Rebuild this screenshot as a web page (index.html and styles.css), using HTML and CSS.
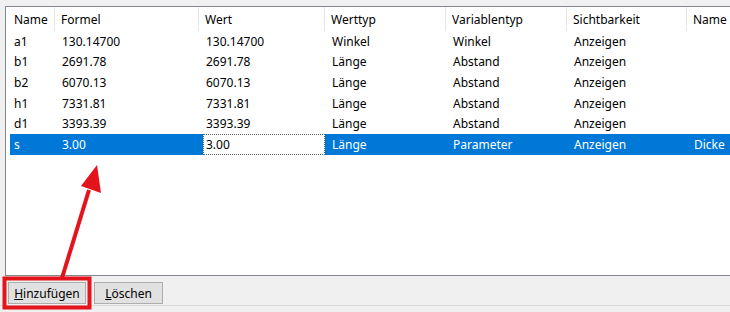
FILE: index.html
```html
<!DOCTYPE html>
<html lang="de">
  <head>
    <meta charset="UTF-8" />
    <title>Variablen</title>
    <link rel="stylesheet" href="styles.css">
  </head>
  <body>
    <div class="panel">
      <div class="grid">
        <div class="head">Name</div>
        <div class="head">Formel</div>
        <div class="head">Wert</div>
        <div class="head">Werttyp</div>
        <div class="head">Variablentyp</div>
        <div class="head">Sichtbarkeit</div>
        <div class="head last">Name</div>

        <div class="cell">a1</div><div class="cell">130.14700</div><div class="cell">130.14700</div><div class="cell">Winkel</div><div class="cell">Winkel</div><div class="cell">Anzeigen</div><div class="cell"></div>
        <div class="cell">b1</div><div class="cell">2691.78</div><div class="cell">2691.78</div><div class="cell">Länge</div><div class="cell">Abstand</div><div class="cell">Anzeigen</div><div class="cell"></div>
        <div class="cell">b2</div><div class="cell">6070.13</div><div class="cell">6070.13</div><div class="cell">Länge</div><div class="cell">Abstand</div><div class="cell">Anzeigen</div><div class="cell"></div>
        <div class="cell">h1</div><div class="cell">7331.81</div><div class="cell">7331.81</div><div class="cell">Länge</div><div class="cell">Abstand</div><div class="cell">Anzeigen</div><div class="cell"></div>
        <div class="cell">d1</div><div class="cell">3393.39</div><div class="cell">3393.39</div><div class="cell">Länge</div><div class="cell">Abstand</div><div class="cell">Anzeigen</div><div class="cell"></div>

        <div class="cell sel">s</div><div class="cell sel">3.00</div><div class="cell sel editwrap"><span class="edit">3.00</span></div><div class="cell sel">Länge</div><div class="cell sel">Parameter</div><div class="cell sel">Anzeigen</div><div class="cell sel">Dicke</div>
      </div>
    </div>

    <div class="buttons">
      <button class="btn add"><u>H</u>inzufügen</button>
      <button class="btn del"><u>L</u>öschen</button>
    </div>
    <div class="footer"></div>

    <!-- annotation: red arrow and frame -->
    <svg class="mark" width="730" height="312" viewBox="0 0 730 312">
      <rect x="4.5" y="278.5" width="85" height="29" fill="none" stroke="#e3141b" stroke-width="4" />
      <line x1="62" y1="278" x2="89" y2="190" stroke="#e3141b" stroke-width="4" />
      <polygon points="97,165 81,186 101,193" fill="#e3141b" />
    </svg>
  </body>
</html>
```

FILE: styles.css
```css
body {
  margin: 0;
  width: 730px;
  height: 312px;
  overflow: hidden;
  background-color: #f0f0f0;
  font-family: "Noto Sans", "Open Sans", sans-serif;
  font-size: 12px;
  color: #000;
  position: relative;
}

.panel {
  margin: 6px 0 0 5px;
  height: 268px;
  background-color: #fff;
  border: 1px solid #828790;
  border-right: none;
  padding-left: 4px;
  overflow: hidden;
}

.grid {
  display: grid;
  grid-template-columns: 45px 144px 126px 121px 121px 120px 1fr;
  grid-auto-rows: 20.6px;
  grid-template-rows: 24px;
}

.head {
  display: flex;
  align-items: center;
  padding-left: 4px;
  border-right: 1px solid #e5e5e5;
  white-space: nowrap;
}

.head:not(:first-child) {
  padding-left: 6px;
}

.head.last {
  border-right: none;
}

.cell {
  display: flex;
  align-items: center;
  padding-left: 4px;
  white-space: nowrap;
}

.cell:nth-child(7n + 2),
.cell:nth-child(7n + 3),
.cell:nth-child(7n + 4),
.cell:nth-child(7n + 5),
.cell:nth-child(7n + 6),
.cell:nth-child(7n) {
  padding-left: 7px;
}

.sel {
  background-color: #0078d7;
  color: #fff;
}

.cell.editwrap {
  padding-left: 4px;
  align-items: stretch;
}

.edit {
  flex: 1;
  display: flex;
  align-items: center;
  padding-left: 2px;
  background-color: #fff;
  color: #000;
  border: 1px dotted #606060;
}

.buttons {
  display: flex;
  gap: 8px;
  padding: 6px 0 0 8px;
  height: 23px;
}

.btn {
  font-family: inherit;
  font-size: 12px;
  color: #000;
  background-color: #e1e1e1;
  border: 1px solid #adadad;
  padding: 0;
  height: 22px;
}

.btn.add {
  width: 78px;
}

.btn.del {
  width: 69px;
}

.footer {
  margin-top: 0;
  border-top: 1px solid #dadada;
}

.mark {
  position: absolute;
  left: 0;
  top: 0;
}
```
